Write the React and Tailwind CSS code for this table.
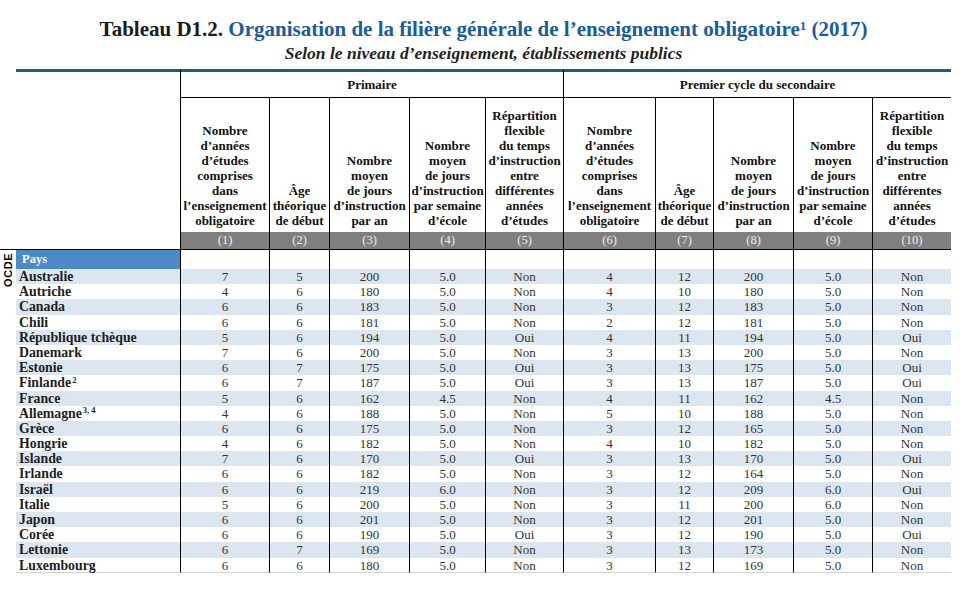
import React from "react";

const rows = [
  ["Australie", "7", "5", "200", "5.0", "Non", "4", "12", "200", "5.0", "Non"],
  ["Autriche", "4", "6", "180", "5.0", "Non", "4", "10", "180", "5.0", "Non"],
  ["Canada", "6", "6", "183", "5.0", "Non", "3", "12", "183", "5.0", "Non"],
  ["Chili", "6", "6", "181", "5.0", "Non", "2", "12", "181", "5.0", "Non"],
  ["République tchèque", "5", "6", "194", "5.0", "Oui", "4", "11", "194", "5.0", "Oui"],
  ["Danemark", "7", "6", "200", "5.0", "Non", "3", "13", "200", "5.0", "Non"],
  ["Estonie", "6", "7", "175", "5.0", "Oui", "3", "13", "175", "5.0", "Oui"],
  ["Finlande", "6", "7", "187", "5.0", "Oui", "3", "13", "187", "5.0", "Oui", "2"],
  ["France", "5", "6", "162", "4.5", "Non", "4", "11", "162", "4.5", "Non"],
  ["Allemagne", "4", "6", "188", "5.0", "Non", "5", "10", "188", "5.0", "Non", "3, 4"],
  ["Grèce", "6", "6", "175", "5.0", "Non", "3", "12", "165", "5.0", "Non"],
  ["Hongrie", "4", "6", "182", "5.0", "Non", "4", "10", "182", "5.0", "Non"],
  ["Islande", "7", "6", "170", "5.0", "Oui", "3", "13", "170", "5.0", "Oui"],
  ["Irlande", "6", "6", "182", "5.0", "Non", "3", "12", "164", "5.0", "Non"],
  ["Israël", "6", "6", "219", "6.0", "Non", "3", "12", "209", "6.0", "Oui"],
  ["Italie", "5", "6", "200", "5.0", "Non", "3", "11", "200", "6.0", "Non"],
  ["Japon", "6", "6", "201", "5.0", "Non", "3", "12", "201", "5.0", "Non"],
  ["Corée", "6", "6", "190", "5.0", "Oui", "3", "12", "190", "5.0", "Oui"],
  ["Lettonie", "6", "7", "169", "5.0", "Non", "3", "13", "173", "5.0", "Non"],
  ["Luxembourg", "6", "6", "180", "5.0", "Non", "3", "12", "169", "5.0", "Non"],
];

// header lines, same set for both levels
const headers = [
  ["Nombre", "d’années", "d’études", "comprises", "dans", "l’enseignement", "obligatoire"],
  ["Âge", "théorique", "de début"],
  ["Nombre", "moyen", "de jours", "d’instruction", "par an"],
  ["Nombre", "moyen", "de jours", "d’instruction", "par semaine", "d’école"],
  ["Répartition", "flexible", "du temps", "d’instruction", "entre", "différentes", "années", "d’études"],
];

function HeaderCell({ lines }) {
  return (
    <div className="border-l border-black h-[134px] flex flex-col justify-end items-center pb-[4px] text-[13px] leading-[15px] font-bold text-[#111] text-center whitespace-nowrap">
      {lines.map((l) => (
        <span key={l}>{l}</span>
      ))}
    </div>
  );
}

export default function App() {
  return (
    <div className="w-[980px] h-[609px] bg-white font-['Liberation_Serif',serif] overflow-hidden">
      <div className="ml-[16px] w-[935px] pt-[16px] text-center text-[21px] leading-[26px] font-bold whitespace-nowrap">
        <span className="text-[#1a1a1a]">Tableau D1.2. </span>
        <span className="text-[#1d5c9a]">
          Organisation de la filière générale de l’enseignement obligatoire
          <sup className="text-[13px]">1</sup> (2017)
        </span>
      </div>
      <div className="ml-[16px] w-[935px] text-center text-[17.5px] leading-[22px] italic font-bold text-[#222]">
        Selon le niveau d’enseignement, établissements publics
      </div>
      <div className="ml-[16px] mt-[5px] w-[935px] h-[3px] bg-[#1f5b7e]" />

      <div className="grid grid-cols-[16px_164px_89px_60px_80px_76px_78px_92px_58px_80px_79px_79px] -mt-[2px]">
        {/* level row */}
        <div />
        <div />
        <div className="col-span-5 h-[28px] border-l border-b border-black flex items-center justify-center text-[13px] font-bold text-[#111] pt-[3px]">
          Primaire
        </div>
        <div className="col-span-5 h-[28px] border-l border-b border-black flex items-center justify-center text-[13px] font-bold text-[#111] pt-[3px]">
          Premier cycle du secondaire
        </div>

        {/* column headers */}
        <div />
        <div />
        {headers.map((h, i) => (
          <HeaderCell key={"p" + i} lines={h} />
        ))}
        {headers.map((h, i) => (
          <HeaderCell key={"s" + i} lines={h} />
        ))}

        {/* column numbers */}
        <div className="h-[17.5px] border-b-[1.5px] border-black" />
        <div className="h-[17.5px] border-b-[1.5px] border-black" />
        {Array.from({ length: 10 }, (_, i) => (
          <div
            key={i}
            className="h-[17.5px] border-l border-b-[1.5px] border-black bg-[#7f7f7f] text-[#ececec] text-[12.5px] leading-[16px] text-center"
          >
            ({i + 1})
          </div>
        ))}

        {/* OCDE side label */}
        <div className="row-span-21 flex justify-center pt-[7px]">
          <span className="[writing-mode:vertical-rl] rotate-180 font-['Liberation_Sans',sans-serif] font-bold text-[11px] leading-[11px] tracking-[0.6px] text-black h-[30px]">
            OCDE
          </span>
        </div>
        <div className="h-[19.5px] bg-[#4d89c5] text-white font-bold text-[12.5px] leading-[19.5px] pl-[6px]">
          Pays
        </div>
        {Array.from({ length: 10 }, (_, i) => (
          <div key={i} className="h-[19.5px] border-l border-black" />
        ))}

        {rows.map((r, ri) => {
          const band = ri % 2 === 0 ? "bg-[#dce6f1]" : "bg-white";
          const last = ri === rows.length - 1 ? "border-b border-b-[#d4d4d4]" : "";
          return (
            <React.Fragment key={r[0]}>
              <div
                className={`h-[15.2px] ${band} ${last} pl-[3px] text-[13.8px] leading-[15.2px] font-bold text-[#1e1e1e] whitespace-nowrap`}
              >
                {r[0]}
                {r[11] && <sup className="text-[8.5px] ml-[1px]">{r[11]}</sup>}
              </div>
              {r.slice(1, 11).map((v, ci) => (
                <div
                  key={ci}
                  className={`h-[15.2px] ${band} ${last} border-l border-l-black text-center text-[13px] leading-[15.2px] text-[#333]`}
                >
                  {v}
                </div>
              ))}
            </React.Fragment>
          );
        })}
      </div>
    </div>
  );
}
